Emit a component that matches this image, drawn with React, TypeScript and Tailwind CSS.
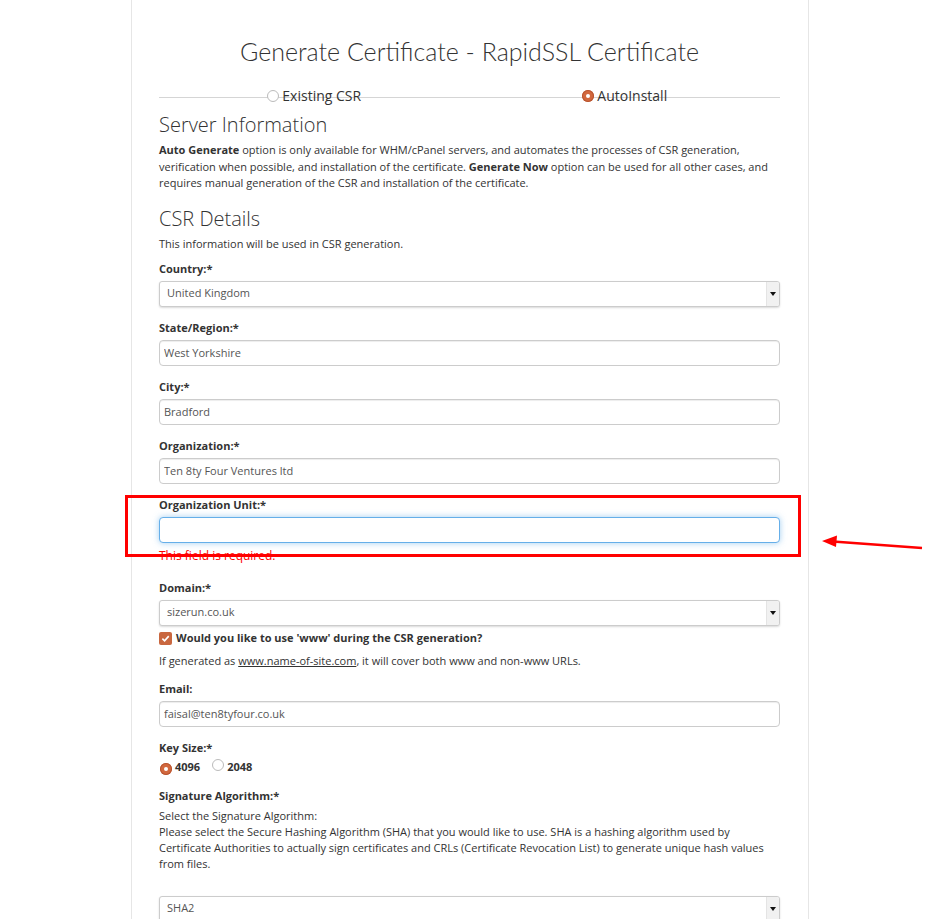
import React from "react";

const BODY = { fontFamily: '"Open Sans", "Noto Sans", sans-serif' };
const HEAD = { fontFamily: 'Lato, "Open Sans", sans-serif' };

const Label = ({ children }: { children: React.ReactNode }) => (
  <div className="text-[11px] leading-[16px] font-bold text-[#333] mb-[4px]">
    {children}
  </div>
);

const TextInput = ({ value, focused }: { value: string; focused?: boolean }) => (
  <input
    readOnly
    value={value}
    className={
      "block w-full h-[26px] px-[4px] text-[11px] text-[#555] bg-white rounded-[4px] border outline-none " +
      (focused
        ? "border-[#66afe9] shadow-[0_0_6px_rgba(102,175,233,0.6)]"
        : "border-[#ccc] shadow-[inset_0_1px_1px_rgba(0,0,0,0.075)]")
    }
    style={BODY}
  />
);

const SelectBox = ({ value }: { value: string }) => (
  <div className="flex h-[26px] w-full rounded-[3px] border border-[#ccc] bg-white shadow-[0_1px_2px_rgba(0,0,0,0.15)] overflow-hidden">
    <div className="flex-1 flex items-center pl-[7px] text-[11px] text-[#555]">{value}</div>
    <div className="w-[13px] flex items-center justify-center bg-[#f1f1f1] border-l border-[#e4e4e4]">
      <div className="w-0 h-0 border-l-[3px] border-r-[3px] border-t-[4px] border-l-transparent border-r-transparent border-t-[#111]" />
    </div>
  </div>
);

const Radio = ({ checked }: { checked?: boolean }) =>
  checked ? (
    <span className="relative inline-flex w-[12px] h-[12px] rounded-full bg-[#d2683e] items-center justify-center shadow-[inset_0_0_0_1px_#b95530]">
      <span className="w-[4px] h-[4px] rounded-full bg-white" />
    </span>
  ) : (
    <span className="relative inline-block w-[12px] h-[12px] rounded-full bg-white border border-[#bbb]" />
  );

const Field = ({
  label,
  children,
  mb = "mb-[13px]",
}: {
  label: string;
  children: React.ReactNode;
  mb?: string;
}) => (
  <div className={mb}>
    <Label>{label}</Label>
    {children}
  </div>
);

export default function App() {
  return (
    <div className="min-h-screen bg-white" style={BODY}>
      <div className="ml-[131px] w-[678px] min-h-[919px] border-x border-[#e6e6e6] pl-[27px] pr-[28px] pt-[35px] pb-[20px] text-[#333]">
        <h1
          className="text-center text-[25px] leading-[32px] text-[#333] font-light"
          style={HEAD}
        >
          Generate Certificate - RapidSSL Certificate
        </h1>

        <div className="relative mt-[20px] grid grid-cols-2 h-[18px]">
          <div className="absolute left-0 right-0 top-[10px] h-px bg-[#d5d5d5]" />
          <div className="relative flex items-center justify-center gap-[3px] text-[14px] leading-[16px] text-[#333] -mt-[1px]">
            <Radio />
            <span>Existing CSR</span>
          </div>
          <div className="relative flex items-center justify-center gap-[3px] text-[14px] leading-[16px] text-[#333] -mt-[1px]">
            <Radio checked />
            <span>AutoInstall</span>
          </div>
        </div>

        <h2 className="mt-[7px] text-[20px] leading-[26px] font-light">Server Information</h2>
        <p className="mt-[4px] text-[11px] leading-[16.5px]">
          <b>Auto Generate</b> option is only available for WHM/cPanel servers, and automates the
          processes of CSR generation, verification when possible, and installation of the
          certificate. <b>Generate Now</b> option can be used for all other cases, and requires
          manual generation of the CSR and installation of the certificate.
        </p>

        <h2 className="mt-[14px] text-[20px] leading-[26px] font-light">CSR Details</h2>
        <p className="mt-[4px] text-[11px] leading-[16px]">
          This information will be used in CSR generation.
        </p>

        <div className="mt-[9px]">
          <Field label="Country:*">
            <SelectBox value="United Kingdom" />
          </Field>
          <Field label="State/Region:*">
            <TextInput value="West Yorkshire" />
          </Field>
          <Field label="City:*">
            <TextInput value="Bradford" />
          </Field>
          <Field label="Organization:*">
            <TextInput value="Ten 8ty Four Ventures ltd" />
          </Field>

          <div className="relative mb-[16px]">
            <Label>Organization Unit:*</Label>
            <TextInput value="" focused />
            <div className="mt-[5px] text-[12px] leading-[16px] text-[#f00]">
              This field is required.
            </div>
            <div className="absolute left-[-34px] right-[-21px] top-[-2px] h-[62px] border-[3px] border-[#f00]" />
            <svg
              className="absolute left-[660px] top-[33px]"
              width="106"
              height="22"
              viewBox="0 0 106 22"
            >
              <line x1="14" y1="11.5" x2="103" y2="18" stroke="#f00" strokeWidth="2.5" />
              <polygon points="3,11 18,5.5 17,17" fill="#f00" />
            </svg>
          </div>

          <div className="mb-[5px]">
            <Label>Domain:*</Label>
            <SelectBox value="sizerun.co.uk" />
          </div>
          <div className="flex items-center gap-[4px] h-[16px] text-[11px] font-bold">
            <span className="inline-flex w-[13px] h-[13px] rounded-[2px] bg-[#c9673f] items-center justify-center">
              <svg width="9" height="9" viewBox="0 0 10 10">
                <path d="M1.5 5.2 L4 7.6 L8.6 2.4" stroke="#fff" strokeWidth="1.8" fill="none" />
              </svg>
            </span>
            Would you like to use 'www' during the CSR generation?
          </div>
          <p className="mt-[6px] text-[11px] leading-[16px] mb-[12px]">
            If generated as <span className="underline">www.name-of-site.com</span>, it will cover
            both www and non-www URLs.
          </p>

          <Field label="Email:">
            <TextInput value="faisal@ten8tyfour.co.uk" />
          </Field>

          <div className="mb-[12px]">
            <Label>Key Size:*</Label>
            <div className="mt-[1px] flex items-center h-[16px] text-[11px] font-bold">
              <span className="ml-[1px]">
                <Radio checked />
              </span>
              <span className="ml-[3px]">4096</span>
              <span className="ml-[12px]">
                <Radio />
              </span>
              <span className="ml-[3px]">2048</span>
            </div>
          </div>

          <div>
            <Label>Signature Algorithm:*</Label>
            <p className="text-[11px] leading-[16px]">
              Select the Signature Algorithm:
              <br />
              Please select the Secure Hashing Algorithm (SHA) that you would like to use. SHA is a
              hashing algorithm used by Certificate Authorities to actually sign certificates and
              CRLs (Certificate Revocation List) to generate unique hash values from files.
            </p>
            <div className="mt-[24px]">
              <SelectBox value="SHA2" />
            </div>
          </div>
        </div>
      </div>
    </div>
  );
}
